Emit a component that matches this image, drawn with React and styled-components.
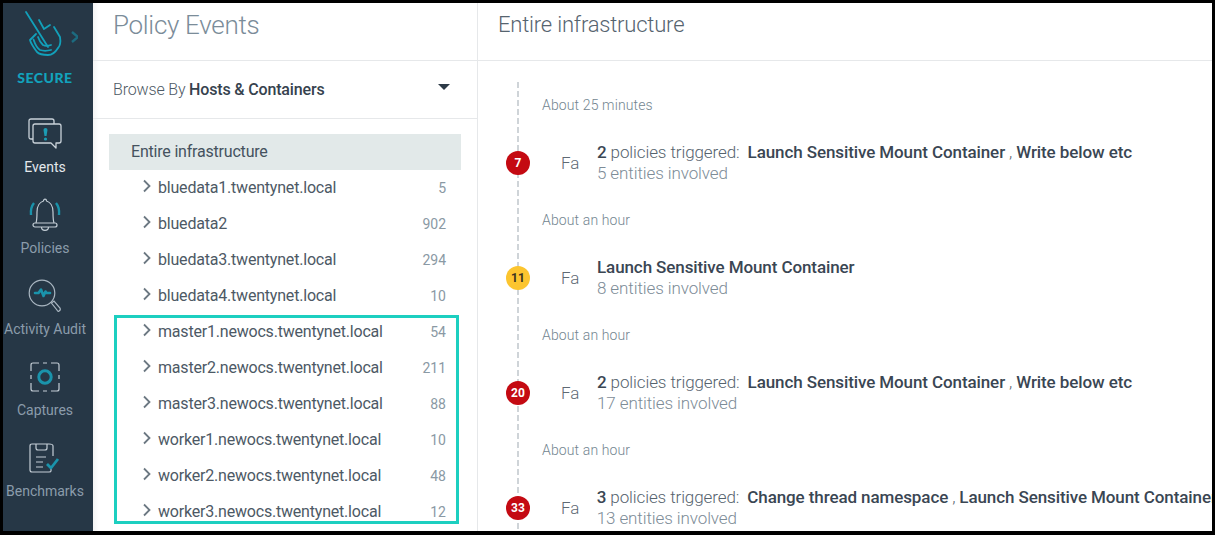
import React from "react";
import styled, { createGlobalStyle } from "styled-components";

const Global = createGlobalStyle`
  html, body { margin: 0; padding: 0; background: #000; }
  body { font-family: Roboto, "Liberation Sans", sans-serif; overflow: hidden; }
  * { box-sizing: border-box; }
`;

const Frame = styled.div`
  width: 1215px; height: 535px; padding: 3px 3px 4px 3px; background: #000;
`;
const Screen = styled.div`
  display: flex; width: 100%; height: 100%; overflow: hidden; background: #fff;
`;
const Sidebar = styled.nav`
  flex: 0 0 90px; background: #263746; display: flex; flex-direction: column; align-items: center; overflow: hidden; padding-right: 6px;
`;
const Brand = styled.div`
  flex: 0 0 111px; width: 100%; display: flex; flex-direction: column; align-items: center; padding-top: 7px;
`;
const BrandName = styled.div`
  font-family: Lato, Roboto, sans-serif; font-weight: 900; font-size: 14px; letter-spacing: .5px; line-height: 17px; color: #12a3bd; margin-top: 7px;
`;
const NavItem = styled.div`
  flex: 0 0 81px; display: flex; flex-direction: column; align-items: center; width: 100%;
  color: ${p => (p.$active ? "#e3e8ec" : "#8b9cab")};
`;
const NavIcon = styled.div`
  height: 40px; display: flex; align-items: center; justify-content: center;
`;
const NavLabel = styled.div`
  font-size: 14px; line-height: 18px; margin-top: 4px; white-space: nowrap;
`;

const Middle = styled.section`
  flex: 0 0 385px; border-right: 1px solid #e6e8ea; background: linear-gradient(90deg,#f4f4f4 0,#fff 6px); display: flex; flex-direction: column;
`;
const MidHeader = styled.header`
  height: 58px; flex: none; border-bottom: 1px solid #e6e8ea; padding: 4px 0 0 20px;
  font-size: 26px; font-weight: 300; line-height: 36px; color: #7b8c99; letter-spacing: -.3px;
`;
const Browse = styled.div`
  height: 58px; flex: none; border-bottom: 1px solid #e6e8ea; padding: 0 27px 0 20px;
  display: flex; align-items: center; justify-content: space-between;
  font-size: 16px; font-weight: 300; color: #4d5964; letter-spacing: -.16px;
  b { font-weight: 500; color: #36424e; }
`;
const Caret = styled.span`
  width: 0; height: 0; border-left: 6px solid transparent; border-right: 6px solid transparent;
  border-top: 6px solid #2d3a47; margin-bottom: 6px;
`;
const Tree = styled.div`
  position: relative; padding: 15px 16px 0 16px; overflow: hidden; flex: 1;
`;
const Selected = styled.div`
  height: 36px; background: #e2e9e9; display: flex; align-items: center; padding: 0 0 2px 22px;
  font-size: 16px; color: #45525e; letter-spacing: -.2px;
`;
const Row = styled.div`
  height: 36px; display: flex; align-items: center; padding: 0 15px 0 33px; font-size: 16px; color: #4d5965;
  svg { flex: none; margin-right: 6px; margin-top: -4px; }
`;
const RowName = styled.span` flex: 1; margin-top: -2px; letter-spacing: -.2px; `;
const Count = styled.span` font-size: 14px; color: #8a99a4; `;
const Highlight = styled.div`
  position: absolute; left: 21px; top: 196px; width: 345px; height: 209px; border: 3px solid #1ccfc0; pointer-events: none;
`;

const Right = styled.section`
  flex: 1; min-width: 0; display: flex; flex-direction: column;
`;
const RightHeader = styled.header`
  height: 58px; flex: none; border-bottom: 1px solid #e6e8ea; padding: 5px 0 0 20px;
  font-size: 22px; font-weight: 300; line-height: 34px; color: #56646f; letter-spacing: -.2px;
`;
const Timeline = styled.div`
  position: relative; flex: 1; overflow: hidden; padding: 0 0 0 64px;
`;
const Rail = styled.div`
  position: absolute; left: 39px; top: 21px; bottom: 0; width: 2px;
  background: repeating-linear-gradient(180deg,#cfd4d8 0,#cfd4d8 6px,transparent 6px,transparent 9px);
`;
const Group = styled.div` height: 115px; padding-top: 35px; position: relative; `;
const When = styled.div` font-size: 14px; line-height: 18px; font-weight: 300; color: #738590; letter-spacing: .13px; `;
const Event = styled.div`
  display: flex; margin-top: 28px; white-space: nowrap;
`;
const Badge = styled.span`
  position: absolute; left: -36px; top: 90px; width: 24px; height: 24px; border-radius: 50%;
  display: flex; align-items: center; justify-content: center; font-size: 12px; font-weight: 700;
  background: ${p => p.$bg}; color: ${p => p.$fg};
`;
const Fa = styled.span`
  width: 55px; padding-left: 19px; font-size: 17px; font-weight: 300; color: #5e6a74; line-height: 21px; margin-top: 11px;
`;
const Body = styled.div` min-width: 0; `;
const Title = styled.div`
  font-size: 17px; line-height: 21px; font-weight: 300; color: #56636e; letter-spacing: -.1px;
  b { font-weight: 500; color: #3a4653; }
  i { font-style: normal; margin: 0 4px; }
`;
const Sub = styled.div` font-size: 17px; line-height: 21px; font-weight: 300; color: #7d8c97; letter-spacing: -.1px; `;

const T = "#1a93ab", L = "#c4ced6";

const Logo = () => (
  <svg width="66" height="52" viewBox="0 0 66 52" fill="none" stroke="#12a0ba" strokeWidth="1.8" strokeLinecap="round" strokeLinejoin="round">
    <path d="M14 2 L36 37" />
    <path d="M27 10 L32 19 L38 15" />
    <path d="M42 17 L48 27 C49 33 48 36 46 38 C43 43 40 45 36 45 C31 45 27 44 25 42 C22 38 19 34 18 30 L24 24" />
    <path d="M21.5 29.5 C23 34 25 38 28 40 C31 41 35 41 39 40" />
    <path d="M26 27 C27 30 29 33 31 35 C33 36 36 36 39 35" />
    <path d="M60 22 L66 27 L60 32" stroke="#1c6b80" strokeWidth="2.4" strokeLinecap="butt" />
  </svg>
);
const EventsI = () => (
  <svg width="34" height="32" viewBox="0 0 34 32" fill="none" stroke="#c9d2d9" strokeWidth="1.3" strokeLinejoin="round">
    <path d="M5 21 H3 Q1 21 1 19 V3 Q1 1 3 1 H24 Q26 1 26 3 V6" />
    <path d="M7 6 H31 Q33 6 33 8 V23 Q33 25 31 25 H28 V30 L23 25 H7 Q5 25 5 23 V8 Q5 6 7 6 Z" />
    <path d="M17.5 10 Q19.5 10 19.5 12 L18.5 18 H16.5 L15.5 12 Q15.5 10 17.5 10 Z" fill="#1c9cb4" stroke="none" />
    <circle cx="17.5" cy="21" r="1.6" fill="#1c9cb4" stroke="none" />
  </svg>
);
const PoliciesI = () => (
  <svg width="34" height="36" viewBox="0 0 34 36" fill="none" stroke={L} strokeWidth="1.2" strokeLinejoin="round">
    <path d="M8 26 C9 23 9 20 9 15 C9 9 12 5 15.5 4 C15.5 1.5 18.5 1.5 18.5 4 C22 5 25 9 25 15 C25 20 25 23 26 26" />
    <rect x="5" y="26" width="24" height="4" rx="2" />
    <path d="M13.5 30 C13.5 34.5 20.5 34.5 20.5 30" />
    <path d="M6 6 C3.5 9 2.5 13 3 18" stroke={T} strokeWidth="2.4" />
    <path d="M28 6 C30.5 9 31.5 13 31 18" stroke={T} strokeWidth="2.4" />
  </svg>
);
const AuditI = () => (
  <svg width="34" height="34" viewBox="0 0 34 34" fill="none" stroke="#a9b6c1" strokeWidth="1.2">
    <circle cx="14" cy="14" r="12.8" />
    <path d="M23.5 24 L26 22 L32 29 Q33 31 31 32 Q30 33 29 31 Z" />
    <path d="M7 14 H10.5 L13 10.5 L15.5 17 L17.5 12.5 L18.5 14 H22" stroke={T} strokeWidth="2.6" strokeLinejoin="round" strokeLinecap="round" />
  </svg>
);
const CapturesI = () => (
  <svg width="30" height="30" viewBox="0 0 30 30" fill="none" stroke={L} strokeWidth="1.2">
    <path d="M9 1 H3 Q1 1 1 3 V9 M21 1 H27 Q29 1 29 3 V9 M1 13 V17 M29 13 V17 M13 1 H17 M13 29 H17 M9 29 H3 Q1 29 1 27 V21 M21 29 H27 Q29 29 29 27 V21" />
    <circle cx="15" cy="15" r="6.2" stroke={T} strokeWidth="3" />
  </svg>
);
const BenchI = () => (
  <svg width="32" height="30" viewBox="0 0 32 30" fill="none" stroke={L} strokeWidth="1.2" strokeLinejoin="round">
    <path d="M22 26 V28 Q22 29 20 29 H3 Q1 29 1 27 V3 Q1 1 3 1 H20 Q24 1 24 3 V13" />
    <path d="M7 1 V5 Q7 7 9 7 H16 Q18 7 18 5 V1" />
    <path d="M7 14 H17 M7 19 H14 M7 24 H14" />
    <path d="M18 21 L22 25 L29 16" stroke={T} strokeWidth="2.8" />
  </svg>
);
const GaugeI = () => (
  <svg width="34" height="40" viewBox="0 0 34 40" fill="none" stroke={L} strokeWidth="1.2">
    <path d="M4 30 C4 22 10 17 17 16 M24 19 C28 22 30 26 30 30" />
    <path d="M17 12 V30" stroke={T} strokeWidth="2.4" />
  </svg>
);
const Chev = () => (
  <svg width="10" height="14" viewBox="0 0 10 14" fill="none" stroke="#6c7882" strokeWidth="1.8"><path d="M2 1.5 L7.5 7 L2 12.5" /></svg>
);

const nav = [
  { label: "Events", icon: <EventsI />, active: true },
  { label: "Policies", icon: <PoliciesI /> },
  { label: "Activity Audit", icon: <AuditI /> },
  { label: "Captures", icon: <CapturesI /> },
  { label: "Benchmarks", icon: <BenchI /> },
];
const rows = [
  ["bluedata1.twentynet.local", 5], ["bluedata2", 902], ["bluedata3.twentynet.local", 294], ["bluedata4.twentynet.local", 10],
  ["master1.newocs.twentynet.local", 54], ["master2.newocs.twentynet.local", 211], ["master3.newocs.twentynet.local", 88],
  ["worker1.newocs.twentynet.local", 10], ["worker2.newocs.twentynet.local", 48], ["worker3.newocs.twentynet.local", 12],
];
const R = "#c40a12", Y = "#fcc52f";
const Both = () => (<><b>Launch Sensitive Mount Container</b><i>,</i><b>Write below etc</b></>);
const events = [
  { when: "About 25 minutes", n: 7, bg: R, fg: "#fff", title: <><b>2</b> policies triggered:&nbsp; <Both /></>, sub: "5 entities involved" },
  { when: "About an hour", n: 11, bg: Y, fg: "#3a3320", title: <b>Launch Sensitive Mount Container</b>, sub: "8 entities involved" },
  { when: "About an hour", n: 20, bg: R, fg: "#fff", title: <><b>2</b> policies triggered:&nbsp; <Both /></>, sub: "17 entities involved" },
  { when: "About an hour", n: 33, bg: R, fg: "#fff", title: <><b>3</b> policies triggered:&nbsp; <b>Change thread namespace</b><i>,</i><b>Launch Sensitive Mount Container</b></>, sub: "13 entities involved" },
];

export default function App() {
  return (
    <Frame>
      <Global />
      <Screen>
        <Sidebar>
          <Brand>
            <Logo />
            <BrandName>SECURE</BrandName>
          </Brand>
          {nav.map(n => (
            <NavItem key={n.label} $active={n.active}>
              <NavIcon>{n.icon}</NavIcon>
              <NavLabel>{n.label}</NavLabel>
            </NavItem>
          ))}
          <NavItem><NavIcon><GaugeI /></NavIcon></NavItem>
        </Sidebar>
        <Middle>
          <MidHeader>Policy Events</MidHeader>
          <Browse>
            <span>Browse By <b>Hosts &amp; Containers</b></span>
            <Caret />
          </Browse>
          <Tree>
            <Selected>Entire infrastructure</Selected>
            {rows.map(([name, c]) => (
              <Row key={name}><Chev /><RowName>{name}</RowName><Count>{c}</Count></Row>
            ))}
            <Highlight />
          </Tree>
        </Middle>
        <Right>
          <RightHeader>Entire infrastructure</RightHeader>
          <Timeline>
            <Rail />
            {events.map((e, i) => (
              <Group key={i}>
                <When>{e.when}</When>
                <Badge $bg={e.bg} $fg={e.fg}>{e.n}</Badge>
                <Event>
                  <Fa>Fa</Fa>
                  <Body><Title>{e.title}</Title><Sub>{e.sub}</Sub></Body>
                </Event>
              </Group>
            ))}
          </Timeline>
        </Right>
      </Screen>
    </Frame>
  );
}
